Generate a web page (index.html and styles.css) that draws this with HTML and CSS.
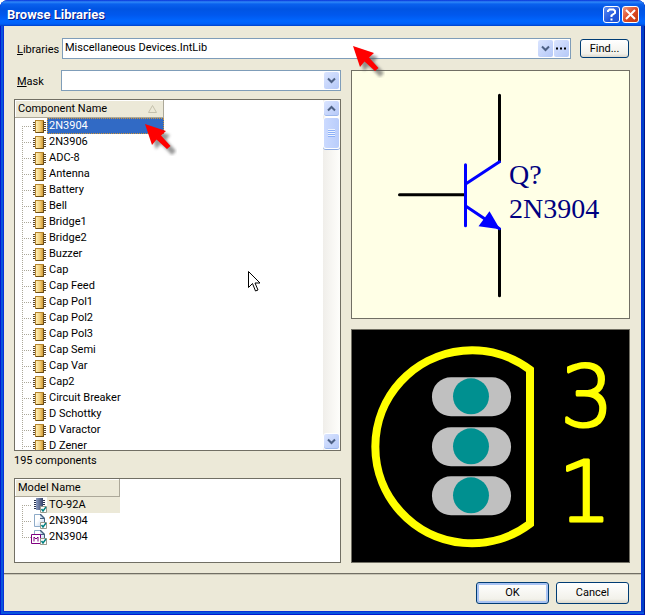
FILE: index.html
```html
<!DOCTYPE html>
<html lang="en">
<head>
<meta charset="utf-8">
<title>Browse Libraries</title>
<link rel="stylesheet" href="styles.css">
</head>
<body>
<svg class="sprites" aria-hidden="true">
  <defs>
    <linearGradient id="gold"><stop offset="0" stop-color="#fff0b8"/><stop offset=".55" stop-color="#f4cf78"/><stop offset="1" stop-color="#d09a38"/></linearGradient>
    <linearGradient id="slate"><stop offset="0" stop-color="#8c9cc0"/><stop offset="1" stop-color="#36446c"/></linearGradient>
    <linearGradient id="paper" x2="1" y2="1"><stop offset=".4" stop-color="#fff"/><stop offset="1" stop-color="#b4cdea"/></linearGradient>
    <filter id="soft" x="-30%" y="-30%" width="180%" height="180%"><feGaussianBlur stdDeviation="1.5"/></filter>
    <symbol id="chip" viewBox="0 0 13 13">
      <path d="M0 2.500h13M0 4.500h13M0 6.500h13M0 8.500h13M0 10.500h13" stroke="#5a4830"/>
      <path d="M2 0h9v13H2z" fill="#b5852f"/>
      <path d="M3 1h7v11H3z" fill="url(#gold)"/>
      <path d="M10.500 1v11.500H3" fill="none" stroke="#6b4c14"/>
    </symbol>
    <symbol id="check" viewBox="0 0 7 7">
      <path d="M.5.5h6v6h-6z" fill="#fff" stroke="#9a9a8c"/>
      <path d="M1.500 3l1.500 2 3-4" fill="none" stroke="#008080" stroke-width="1.500"/>
    </symbol>
    <symbol id="footprint" viewBox="0 0 16 16">
      <path d="M2 3.500h11M2 5.500h11M2 7.500h11M2 9.500h11M2 11.500h11" stroke="#26304e"/>
      <path d="M4 1h7v12H4z" fill="url(#slate)"/>
      <use href="#check" x="8" y="9" width="7" height="7"/>
    </symbol>
    <symbol id="page" viewBox="0 0 16 16">
      <path d="M2.500 1.500h6l4 4v8h-10z" fill="url(#paper)" stroke="#8eabc8"/>
      <path d="M8 1h1l4 4v4h-1V6H8z" fill="#44607f"/>
      <path d="M8 2l3 3H8z" fill="#cfe0f2"/>
      <use href="#check" x="8" y="9" width="7" height="7"/>
    </symbol>
    <symbol id="model" viewBox="0 0 16 16" overflow="visible">
      <use href="#page" width="16" height="16"/>
      <path d="M-.5 5.500h9v9h-9z" fill="#fff" stroke="#800080"/>
      <path d="M2 12.500V8l2 2 2-2v4.500" fill="none" stroke="#800080"/>
      <use href="#check" x="8" y="9" width="7" height="7"/>
    </symbol>
    <symbol id="down" viewBox="0 0 9 7"><path d="M1 1.500l3.500 3.500L8 1.500" fill="none" stroke="#4d6185" stroke-width="2"/></symbol>
    <symbol id="up" viewBox="0 0 9 7"><path d="M1 5.500L4.500 2 8 5.500" fill="none" stroke="#4d6185" stroke-width="2"/></symbol>
    <symbol id="pointer" viewBox="0 0 32 32">
      <path d="M0 0L21 7l-4 5L27 23l-4 4L12 16l-5 5z" transform="translate(4 4)" fill="#555" opacity=".6" filter="url(#soft)"/>
      <path d="M0 0L21 7l-5 4.500L25.500 22l-3.500 3L11.500 15.500 7 21z" fill="#f00"/>
    </symbol>
  </defs>
</svg>

<main class="window">
  <header class="titlebar">
    <h1>Browse Libraries</h1>
    <button class="caption help" type="button" aria-label="Help"><svg viewBox="0 0 15 15"><path d="M4 5V4l1.500-1.500h4L11 4v2L7.500 8.500V10M7.500 11.500v2" fill="none" stroke="#fff" stroke-width="2"/></svg></button>
    <button class="caption close" type="button" aria-label="Close"><svg viewBox="0 0 15 15"><path d="M3 3l9 9M12 3l-9 9" stroke="#fff" stroke-width="2"/></svg></button>
  </header>

  <form class="body">
    <div class="field library-row">
      <label for="libraries"><u>L</u>ibraries</label>
      <div class="combo">
        <select id="libraries"><option>Miscellaneous Devices.IntLib</option></select>
        <span class="drop"><svg><use href="#down"/></svg></span>
        <button class="more" type="button" aria-label="Installed libraries"><svg viewBox="0 0 11 3"><path d="M0 .5h2v2H0zM4 .5h2v2H4zM8 .5h2v2H8z"/></svg></button>
        <svg class="pointer library-pointer"><use href="#pointer"/></svg>
      </div>
      <button class="push find" type="button">Find...</button>
    </div>

    <div class="columns">
      <section class="left">
        <div class="field">
          <label for="mask"><u>M</u>ask</label>
          <div class="combo">
            <select id="mask"><option></option></select>
            <span class="drop"><svg><use href="#down"/></svg></span>
          </div>
        </div>

        <div class="list components">
          <div class="rows">
            <table>
              <thead><tr><th scope="col"><span>Component Name</span><svg class="sort" viewBox="0 0 9 8"><path d="M.5 7.500h8L4.500.5z" fill="none" stroke="#c4c0ac"/></svg></th></tr></thead>
              <tbody>
                <tr class="selected"><td><svg><use href="#chip"/></svg><span>2N3904</span></td></tr>
                <tr><td><svg><use href="#chip"/></svg><span>2N3906</span></td></tr>
                <tr><td><svg><use href="#chip"/></svg><span>ADC-8</span></td></tr>
                <tr><td><svg><use href="#chip"/></svg><span>Antenna</span></td></tr>
                <tr><td><svg><use href="#chip"/></svg><span>Battery</span></td></tr>
                <tr><td><svg><use href="#chip"/></svg><span>Bell</span></td></tr>
                <tr><td><svg><use href="#chip"/></svg><span>Bridge1</span></td></tr>
                <tr><td><svg><use href="#chip"/></svg><span>Bridge2</span></td></tr>
                <tr><td><svg><use href="#chip"/></svg><span>Buzzer</span></td></tr>
                <tr><td><svg><use href="#chip"/></svg><span>Cap</span></td></tr>
                <tr><td><svg><use href="#chip"/></svg><span>Cap Feed</span></td></tr>
                <tr><td><svg><use href="#chip"/></svg><span>Cap Pol1</span></td></tr>
                <tr><td><svg><use href="#chip"/></svg><span>Cap Pol2</span></td></tr>
                <tr><td><svg><use href="#chip"/></svg><span>Cap Pol3</span></td></tr>
                <tr><td><svg><use href="#chip"/></svg><span>Cap Semi</span></td></tr>
                <tr><td><svg><use href="#chip"/></svg><span>Cap Var</span></td></tr>
                <tr><td><svg><use href="#chip"/></svg><span>Cap2</span></td></tr>
                <tr><td><svg><use href="#chip"/></svg><span>Circuit Breaker</span></td></tr>
                <tr><td><svg><use href="#chip"/></svg><span>D Schottky</span></td></tr>
                <tr><td><svg><use href="#chip"/></svg><span>D Varactor</span></td></tr>
                <tr><td><svg><use href="#chip"/></svg><span>D Zener</span></td></tr>
              </tbody>
            </table>
          </div>
          <div class="scrollbar">
            <button type="button" aria-label="Scroll up"><svg><use href="#up"/></svg></button>
            <div class="thumb"></div>
            <button type="button" aria-label="Scroll down"><svg><use href="#down"/></svg></button>
          </div>
          <svg class="pointer row-pointer"><use href="#pointer"/></svg>
          <svg class="cursor" viewBox="0 0 13 21"><path d="M.5.5v16l4-4 3 7.500 2.500-1-3-7h5z" fill="#fff" stroke="#000"/></svg>
        </div>

        <p class="count">195 components</p>

        <div class="list models">
          <table>
            <thead><tr><th scope="col"><span>Model Name</span></th></tr></thead>
            <tbody>
              <tr class="current"><td><svg><use href="#footprint"/></svg><span>TO-92A</span></td></tr>
              <tr><td><svg><use href="#page"/></svg><span>2N3904</span></td></tr>
              <tr><td><svg><use href="#model"/></svg><span>2N3904</span></td></tr>
            </tbody>
          </table>
        </div>
      </section>

      <section class="right">
        <div class="preview schematic">
          <svg viewBox="352 71 277 247" role="img" aria-label="Schematic symbol">
            <g fill="none" stroke-width="3" stroke-linecap="round">
              <path d="M499.500 95v66M399.500 194.500H465M499.500 229v66.500" stroke="#000"/>
              <path d="M465.500 164.500v61M466 183.500l33.500-22M466 206l33.500 22.500" stroke="#00f"/>
            </g>
            <path d="M489.500 211l-11 15 21.500 3z" fill="#00f"/>
            <text x="509" y="184">Q?</text>
            <text x="509" y="218">2N3904</text>
          </svg>
        </div>
        <div class="preview pcb">
          <svg viewBox="352 330 277 231" role="img" aria-label="Footprint">
            <path d="M530 369.500A96.500 96.500 0 1 0 530 523.500z" fill="none" stroke="#ff0" stroke-width="8"/>
            <g fill="#c0c0c0">
              <rect x="432" y="377" width="79" height="39" rx="19"/>
              <rect x="432" y="427" width="79" height="39" rx="19"/>
              <rect x="432" y="476" width="79" height="39" rx="19"/>
            </g>
            <g fill="#009090">
              <circle cx="471" cy="396" r="18"/><circle cx="471" cy="446" r="18"/><circle cx="471" cy="495" r="18"/>
            </g>
            <text x="587" y="426">3</text>
            <text x="585" y="521">1</text>
          </svg>
        </div>
      </section>
    </div>

    <footer class="actions">
      <button class="push default" type="submit">OK</button>
      <button class="push" type="button">Cancel</button>
    </footer>
  </form>
</main>
</body>
</html>
```
FILE: styles.css
```css
* { box-sizing: border-box; }

body {
  margin: 0;
  background: #fff;
  font: 11px/16px Roboto, "Liberation Sans", sans-serif;
  color: #000;
}

button, select { font: inherit; color: inherit; }
svg { display: block; }
.sprites { position: absolute; width: 0; height: 0; }

.window {
  display: flex;
  flex-direction: column;
  height: 100vh;
  min-height: 400px;
  padding: 0 4px 4px;
  border-radius: 8px 8px 0 0;
  background: #0831d9;
  box-shadow: inset 1px -1px #0019cf, inset -1px -1px #00138c, inset 3px -3px #0855dd, inset -3px -3px #0040c8;
  overflow: hidden;
}

.titlebar {
  display: flex;
  align-items: center;
  gap: 2px;
  flex: none;
  height: 26px;
  margin: 0 -4px;
  padding: 3px 6px 0 7px;
  background: linear-gradient(#0831d9 0, #2f88f8 2px, #0a61ee 4px, #0054e3 9px, #0058ee 15px, #0066ff 21px, #0060f8 24px, #0040c8 26px);
}

.titlebar h1 {
  flex: 1;
  margin: 0;
  font: bold 13px/20px Roboto, "Liberation Sans", sans-serif;
  color: #fff;
  text-shadow: 1px 1px #0a1883;
}

.caption {
  width: 17px;
  height: 17px;
  padding: 0;
  border: 1px solid #fff;
  border-radius: 3px;
}

.caption svg { width: 15px; height: 15px; }
.help { background: linear-gradient(135deg, #5b8df5, #2257dc 60%, #1c4fd0); }
.close { background: linear-gradient(135deg, #f09a80, #de4a25 50%, #c03a10); }

.body {
  display: flex;
  flex: 1;
  flex-direction: column;
  min-height: 0;
  margin: 0;
  background: #ece9d8;
}

.field { display: flex; align-items: center; }
.field label { flex: none; width: 47px; padding: 3px 0 0 3px; }
.library-row { padding: 12px 12px 0 10px; }
.library-row label { width: 48px; }
.library-row .combo { margin-right: 9px; }

.combo {
  position: relative;
  display: flex;
  flex: 1;
  gap: 1px;
  height: 21px;
  padding: 1px;
  border: 1px solid #7f9db9;
  background: #fff;
}

.combo select {
  flex: 1;
  min-width: 0;
  padding: 0 2px 2px 1px;
  border: 0;
  appearance: none;
  background: none;
}

.drop, .more {
  display: flex;
  align-items: center;
  justify-content: center;
  width: 15px;
  padding: 0;
  border: 0;
  border-radius: 2px;
  background: linear-gradient(135deg, #dbe5ff, #b4c8f8);
}

.drop { pointer-events: none; }
.drop svg, .scrollbar svg { width: 9px; height: 7px; }
.more svg { width: 11px; height: 3px; }

.push {
  height: 21px;
  padding: 0;
  border: 1px solid #003c74;
  border-radius: 3px;
  background: linear-gradient(#fff, #f2f1ea 80%, #dcd8cc);
}

.find { width: 49px; height: 19px; }

.columns {
  display: grid;
  flex: 1;
  grid-template-columns: 327fr 279fr;
  gap: 10px;
  min-height: 0;
  padding: 11px 11px 10px 10px;
}

.left, .right { display: flex; flex-direction: column; min-width: 0; min-height: 0; }
.right { gap: 10px; }

.list {
  position: relative;
  display: flex;
  border: 1px solid #716f64;
  background: #fff;
  overflow: hidden;
}

.components { flex: 1; min-height: 0; margin-top: 8px; }
.models { flex: none; height: 85px; }
.models table { width: 105px; }
.rows { flex: 1; min-height: 0; overflow: hidden; }

table { width: 149px; border-collapse: collapse; align-self: flex-start; }
th, td { padding: 0; text-align: left; font-weight: normal; }

th {
  display: flex;
  align-items: center;
  justify-content: space-between;
  height: 18px;
  padding: 0 6px 0 3px;
  border-right: 1px solid #aca899;
  border-bottom: 1px solid #aca899;
  background: #ece9d8;
  box-shadow: inset 1px 1px #fff;
}

.sort { width: 9px; height: 8px; }

td {
  display: flex;
  align-items: center;
  height: 16px;
  padding-left: 18px;
  background:
    repeating-linear-gradient(#aca899 0 1px, #fff 1px 2px) 7px 0 / 1px 100% no-repeat,
    repeating-linear-gradient(90deg, #aca899 0 1px, #fff 1px 2px) 7px 8px / 9px 1px no-repeat;
}

tr:first-child td { background-position: 7px 8px, 7px 8px; }
td svg { flex: none; width: 13px; height: 13px; }

td span {
  flex: 1;
  margin-left: 1px;
  padding-left: 2px;
  white-space: nowrap;
}

.selected span {
  height: 16px;
  outline: 1px dotted #ce953a;
  outline-offset: -1px;
  background: #316ac5;
  color: #fff;
}

.models td { padding-left: 17px; }
.models td svg { width: 16px; height: 16px; margin-right: -2px; overflow: visible; }
.models tr:last-child td { background-size: 1px 9px, 9px 1px; }
.current span { background: #ece9d8; }

.scrollbar {
  display: flex;
  flex-direction: column;
  width: 17px;
  background: linear-gradient(90deg, #f0eeea, #fefefb);
}

.scrollbar button {
  display: flex;
  align-items: center;
  justify-content: center;
  height: 17px;
  padding: 0;
  border: 1px solid #fff;
  border-radius: 3px;
  background: linear-gradient(135deg, #dbe5ff, #b4c8f8);
  box-shadow: inset 0 -1px #9db8ec;
}

.scrollbar button:last-child { margin-top: auto; }

.thumb {
  height: 32px;
  border: 1px solid #fff;
  border-radius: 3px;
  background:
    repeating-linear-gradient(#eef4fe 0 1px, #8cb0f8 1px 2px) 4px 11px / 7px 8px no-repeat,
    linear-gradient(90deg, #cbdaff, #b9cdfb);
  box-shadow: 0 1px #8ba9e3;
}

.pointer { position: absolute; z-index: 1; width: 32px; height: 32px; overflow: visible; }
.library-pointer { left: 290px; top: 7px; }
.row-pointer { left: 130px; top: 24px; }
.cursor { position: absolute; left: 233px; top: 171px; width: 13px; height: 21px; }

.count { flex: none; height: 27px; margin: 0; line-height: 20px; }

.preview {
  flex: 249 1 0;
  min-height: 0;
  border: 1px solid #716f64;
  background: #ffffe6;
}

.preview svg { width: 100%; height: 100%; }
.schematic text { font: 28px "Liberation Serif", "Times New Roman", serif; fill: #000080; }
.pcb { flex-grow: 233; background: #000; }

.pcb text {
  font: 200 84px "DejaVu Sans", sans-serif;
  text-anchor: middle;
  fill: #ff0;
  stroke: #ff0;
  stroke-width: 3px;
  stroke-linejoin: round;
}

.actions {
  display: flex;
  justify-content: flex-end;
  gap: 7px;
  flex: none;
  padding: 8px 12px 7px;
  border-top: 1px solid #716f64;
  box-shadow: inset 0 1px #c9c6b6;
}

.actions .push { width: 73px; height: 22px; }
.default { box-shadow: inset 0 0 0 2px #a9c3f3; }
```
